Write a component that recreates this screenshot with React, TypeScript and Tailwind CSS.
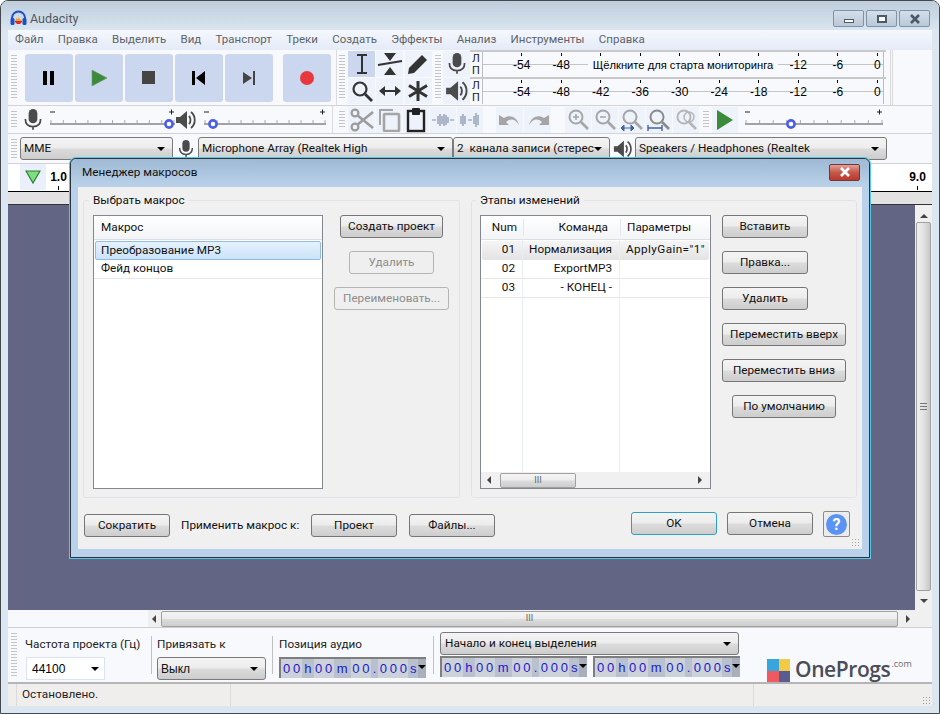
import type { ReactNode } from 'react'

const winBtnBg = 'bg-[linear-gradient(#f4f4f4_0%,#ececec_48%,#dcdcdc_52%,#cdcdcd_100%)]'

function Grip({ className = '' }: { className?: string }) {
  return (
    <div className={`w-[10px] shrink-0 flex flex-col justify-center items-center ${className}`}>
      <div className="w-[6px] h-full my-[5px] bg-[repeating-linear-gradient(#c4c4c4_0,#c4c4c4_1px,#f8f9fc_1px,#f8f9fc_3px)]" />
    </div>
  )
}

function TransportBtn({ children, className = '' }: { children: ReactNode; className?: string }) {
  return (
    <div className={`w-[48px] h-[48px] rounded-[3px] bg-[#cbd7ee] flex items-center justify-center ${className}`}>
      {children}
    </div>
  )
}

function Tool({ children, active, w = 'w-[27px]' }: { children: ReactNode; active?: boolean; w?: string }) {
  return (
    <div className={`${w} h-[26px] flex items-center justify-center ${active ? 'bg-[#cbd7ee]' : 'bg-[#eef2fb]'}`}>
      {children}
    </div>
  )
}

function Mic({ c = '#4b4b4b', size = 22 }: { c?: string; size?: number }) {
  return (
    <svg width={size} height={size} viewBox="0 0 22 22">
      <rect x="7" y="1" width="8" height="13" rx="4" fill={c} />
      <path d="M4 10c0 5 3 7 7 7s7-2 7-7M11 17v3" fill="none" stroke={c} strokeWidth="1.6" />
    </svg>
  )
}

function Speaker({ c = '#4b4b4b', size = 22 }: { c?: string; size?: number }) {
  return (
    <svg width={size} height={size} viewBox="0 0 22 22">
      <path d="M1 8h4l7-6v18l-7-6H1z" fill={c} />
      <path d="M14 7c2 2 2 6 0 8M16 3c5 4 5 12 0 16" fill="none" stroke={c} strokeWidth="1.8" />
    </svg>
  )
}

function Slider({ w, thumb }: { w: number; thumb: number }) {
  const ticks = Array.from({ length: 11 }, (_, i) => 1 + (i * (w - 2)) / 10)
  return (
    <svg width={w} height="24" viewBox={`0 0 ${w} 24`} className="shrink-0">
      <path d="M0 4h5" stroke="#222" />
      <path d={`M${w - 6} 4h5M${w - 3.5} 1.5v5`} stroke="#222" />
      {ticks.map((t) => (
        <path key={t} d={`M${t} 12v3`} stroke="#aaa" />
      ))}
      <path d={`M0 16h${w}`} stroke="#a2a2a2" strokeWidth="2" />
      <circle cx={thumb} cy="16" r="3.6" fill="#fff" stroke="#4a5ee8" strokeWidth="2.6" />
    </svg>
  )
}

function Magnifier({ c = '#a5a5a5', inner }: { c?: string; inner?: ReactNode }) {
  return (
    <svg width="24" height="24" viewBox="0 0 24 24">
      <circle cx="10" cy="9" r="6.5" fill="none" stroke={c} strokeWidth="2" />
      <path d="M15 14l7 7" stroke={c} strokeWidth="2.6" />
      {inner}
    </svg>
  )
}

function Combo({ w, text, textClass = '' }: { w: string; text: string; textClass?: string }) {
  return (
    <div className={`${w} h-[23px] shrink-0 rounded-[3px] border border-[#7a7a7a] ${winBtnBg} flex items-center pl-[3px] pr-[7px]`}>
      <span className={`flex-1 min-w-0 whitespace-pre text-[#111] ${textClass}`}>{text}</span>
      <span className="shrink-0 w-0 h-0 border-x-[4px] border-x-transparent border-t-[4px] border-t-black" />
    </div>
  )
}

function Btn({ children, w, disabled, focus }: { children: ReactNode; w: string; disabled?: boolean; focus?: boolean }) {
  const look = disabled
    ? 'border-[#b5b5b5] text-[#8d8d8d] bg-[#efefef]'
    : focus
      ? `border-[#2f9fc9] text-[#111] ${winBtnBg}`
      : `border-[#767676] text-[#111] ${winBtnBg}`
  return (
    <div className={`${w} h-[23px] shrink-0 rounded-[3px] border flex items-center justify-center ${look}`}>
      {children}
    </div>
  )
}

function Digits({ s, w }: { s: string; w: string }) {
  return (
    <span className={`${w} h-full bg-[#cdd1d8] flex items-center justify-center`}>
      {s.split('').map((d, i) => (
        <span key={i} className="w-[10px] text-center">{d}</span>
      ))}
    </span>
  )
}

function Unit({ s, w }: { s: string; w: string }) {
  return <span className={`${w} h-full flex items-center justify-center`}>{s}</span>
}

function TimeBox() {
  return (
    <div className="w-[147px] h-[21px] shrink-0 border-2 border-[#7e7e7e] border-r-0 border-b-0 bg-[#b9c0ce] flex items-center text-[#1a1ad0] text-[13px] font-['Liberation_Sans',sans-serif]">
      <Digits s="00" w="w-[22px]" />
      <Unit s="h" w="w-[12px]" />
      <Digits s="00" w="w-[20px]" />
      <Unit s="m" w="w-[18px]" />
      <Digits s="00" w="w-[20px]" />
      <Unit s="." w="w-[8px]" />
      <Digits s="000" w="w-[30px]" />
      <Unit s="s" w="w-[10px]" />
      <span className="flex-1 h-full bg-[#a9afbb] flex items-start justify-center pt-[6px]">
        <span className="w-0 h-0 border-x-[4px] border-x-transparent border-t-[4px] border-t-black" />
      </span>
    </div>
  )
}

function MeterRow({ hint }: { hint?: boolean }) {
  const labels = ['-54', '-48', '-42', '-36', '-30', '-24', '-18', '-12', '-6', '0']
  return (
    <div className="relative h-[27px] flex items-stretch border-t-2 border-[#c9c9c9]">
      <div className="w-[12px] flex flex-col items-center text-[11px] leading-[12px] text-[#222] pt-[1px]">
        <span>Л</span>
        <span>П</span>
      </div>
      <div className="relative w-[402px] border-x border-[#bdbdbd]">
        <div className="absolute left-0 right-0 top-[12px] h-px bg-[#c4c4c4]" />
        <div className="relative flex pl-[19px] text-[12px] text-black font-['Liberation_Sans',sans-serif]">
          {labels.map((l, i) => (
            <div key={l} className="w-[39.5px] shrink-0 flex flex-col items-center">
              <span className="w-px h-[3px] bg-black mt-[1px]" />
              {/* the hint covers the middle labels */}
              {!(hint && i >= 2 && i <= 6) && <span className="leading-[14px] mt-[2px]">{l}</span>}
            </div>
          ))}
        </div>
        {hint && (
          <div className="absolute left-[105px] top-[5px] w-[190px] h-[16px] bg-[#f8f9fc] text-[11.2px] leading-[16px] text-center text-black font-['Liberation_Sans',sans-serif] whitespace-nowrap">
            Щёлкните для старта мониторинга
          </div>
        )}
      </div>
    </div>
  )
}

function Hscroll() {
  return (
    <div className="h-[16px] flex items-center bg-[#f0f0f0]">
      <span className="ml-[6px] w-0 h-0 border-y-[4px] border-y-transparent border-r-[4px] border-r-[#444]" />
      <div className={`ml-[9px] w-[76px] h-[15px] rounded-[2px] border border-[#a0a0a0] ${winBtnBg} flex items-center justify-center text-[9px] leading-none text-[#666]`}>
        III
      </div>
      <span className="flex-1" />
      <span className="mr-[8px] w-0 h-0 border-y-[4px] border-y-transparent border-l-[4px] border-l-[#444]" />
    </div>
  )
}

export default function App() {
  const menu = ['Файл', 'Правка', 'Выделить', 'Вид', 'Транспорт', 'Треки', 'Создать', 'Эффекты', 'Анализ', 'Инструменты', 'Справка']
  const rows = [
    ['01', 'Нормализация', 'ApplyGain="1"'],
    ['02', 'ExportMP3', ''],
    ['03', '- КОНЕЦ -', ''],
  ]

  return (
    <div className="relative w-[940px] h-[714px] overflow-hidden rounded-t-[8px] border border-[#45494e] bg-[#dbe6f1] font-['Roboto','Open_Sans',sans-serif] text-[11.75px] flex flex-col">
      {/* title */}
      <div className="h-[29px] shrink-0 bg-[linear-gradient(#bfcddb,#d9e5f0)] flex items-center pl-[9px]">
        <svg width="17" height="17" viewBox="0 0 17 17" className="mt-[6px]">
          <path d="M2 10V8a6.5 6.5 0 0 1 13 0v2" fill="none" stroke="#1b4fc4" strokeWidth="2" />
          <rect x="0.5" y="8" width="4" height="7" rx="1.5" fill="#1b4fc4" />
          <rect x="12.5" y="8" width="4" height="7" rx="1.5" fill="#1b4fc4" />
          <path d="M5 11h7l-1-2-1 1-1-3-1 2-1-1-1 1z" fill="#f0a020" />
          <path d="M5 11h7v1l-2 2H7l-2-2z" fill="#e02828" />
        </svg>
        <span className="ml-[3px] mt-[7px] text-[12.5px] text-[#4f5963]">Audacity</span>
        <div className="ml-auto mr-[9px] self-start mt-[9px] flex gap-[2px]">
          {['min', 'max', 'close'].map((k) => (
            <div key={k} className="w-[31px] h-[17px] rounded-[2px] border border-[#8093a6] bg-[linear-gradient(#d4dfea,#b9c8d6)] flex items-center justify-center">
              {k === 'min' && <span className="w-[10px] h-[4px] mt-[4px] border border-[#4b5a68] bg-white" />}
              {k === 'max' && <span className="w-[10px] h-[8px] border-2 border-[#4b5a68] bg-white" />}
              {k === 'close' && (
                <svg width="12" height="10" viewBox="0 0 12 10">
                  <path d="M2 1l8 8M10 1l-8 8" stroke="#4b5a68" strokeWidth="2.6" />
                </svg>
              )}
            </div>
          ))}
        </div>
      </div>

      <div className="mx-[7px] flex-1 flex flex-col bg-[#f8f9fc] min-h-0">
        {/* menu */}
        <div className="h-[20px] shrink-0 bg-[linear-gradient(#f5f8fd,#e4ebf7)] flex items-center pl-[7px] gap-[14.3px] text-[11.5px] text-[#5f6368]">
          {menu.map((m) => (
            <span key={m}>{m}</span>
          ))}
        </div>

        {/* toolbar row 1 */}
        <div className="h-[56px] shrink-0 flex border-b border-[#d3d3d3]">
          <Grip className="ml-[1px]" />
          <div className="w-[318px] flex items-center pl-[6px] gap-[2px] border-r border-[#dcdcdc]">
            <TransportBtn>
              <svg width="14" height="14" viewBox="0 0 14 14"><path d="M1 0h4v14H1zM8 0h4v14H8z" fill="#000" /></svg>
            </TransportBtn>
            <TransportBtn>
              <svg width="16" height="16" viewBox="0 0 16 16"><path d="M1 0l15 8-15 8z" fill="#3c8a3c" stroke="#6a9a6a" strokeWidth=".6" /></svg>
            </TransportBtn>
            <TransportBtn>
              <svg width="14" height="14" viewBox="0 0 14 14"><rect width="13" height="13" fill="#454545" /></svg>
            </TransportBtn>
            <TransportBtn>
              <svg width="14" height="14" viewBox="0 0 14 14"><path d="M0 0h3v14H0zM13 0v14L4 7z" fill="#000" /></svg>
            </TransportBtn>
            <TransportBtn>
              <svg width="14" height="14" viewBox="0 0 14 14"><path d="M11 0h2v14h-2zM1 1v12l9-6z" fill="#454545" /></svg>
            </TransportBtn>
            <TransportBtn className="ml-[8px]">
              <svg width="14" height="14" viewBox="0 0 14 14"><circle cx="7" cy="7" r="7" fill="#e8383f" /></svg>
            </TransportBtn>
          </div>
          <Grip className="mr-[1px]" />
          <div className="w-[84px] grid grid-cols-3 gap-[1px] content-center">
            <Tool active>
              <svg width="18" height="22" viewBox="0 0 18 22"><path d="M4 2h10M4 20h10M9 2v18" stroke="#333" strokeWidth="2" /></svg>
            </Tool>
            <Tool>
              <svg width="26" height="24" viewBox="0 0 26 24"><path d="M7 1h12l-6 8zM7 23h12l-6-8z" fill="#333" /><path d="M1 13l24-4" stroke="#333" strokeWidth="2" /></svg>
            </Tool>
            <Tool>
              <svg width="22" height="22" viewBox="0 0 22 22"><path d="M1 21l1-6L15 2l5 5L7 20z" fill="#333" /></svg>
            </Tool>
            <Tool>
              <svg width="22" height="22" viewBox="0 0 22 22"><circle cx="9" cy="9" r="6.5" fill="none" stroke="#333" strokeWidth="2.2" /><path d="M14 14l7 7" stroke="#333" strokeWidth="2.8" /></svg>
            </Tool>
            <Tool>
              <svg width="22" height="14" viewBox="0 0 22 14"><path d="M4 7h14" stroke="#333" strokeWidth="2" /><path d="M0 7l6-5v10zM22 7l-6-5v10z" fill="#333" /></svg>
            </Tool>
            <Tool>
              <svg width="22" height="22" viewBox="0 0 22 22"><path d="M11 1v20M2 5.500l18 11M20 5.500L2 16.500" stroke="#333" strokeWidth="3" /></svg>
            </Tool>
          </div>
          <Grip className="ml-[1px]" />
          <div className="w-[27px] flex flex-col gap-[1px] justify-center">
            <Tool><Mic size={24} /></Tool>
            <Tool><Speaker size={24} /></Tool>
          </div>
          <div className="w-[416px] flex flex-col">
            <MeterRow hint />
            <MeterRow />
          </div>
          <div className="ml-[4px] w-[3px] border-x border-[#d9d9d9]" />
        </div>

        {/* toolbar row 2 */}
        <div className="h-[28px] shrink-0 flex items-center border-b border-[#d3d3d3]">
          <Grip className="ml-[1px] h-full" />
          <span className="w-[28px] flex justify-center"><Mic size={24} /></span>
          <span className="ml-[3px]"><Slider w={125} thumb={119} /></span>
          <span className="w-[22px] flex justify-center"><Speaker /></span>
          <span className="ml-[7px]"><Slider w={122} thumb={9} /></span>
          <span className="ml-[6px] w-px h-full bg-[#dcdcdc]" />
          <Grip className="ml-[4px] h-full" />
          <div className="ml-[1px] flex gap-[1px] items-center">
            <Tool>
              <svg width="24" height="24" viewBox="0 0 24 24"><circle cx="5" cy="5" r="3.4" fill="none" stroke="#9c9c9c" strokeWidth="2.2" /><circle cx="5" cy="19" r="3.4" fill="none" stroke="#9c9c9c" strokeWidth="2.2" /><path d="M7 7l16 13M7 17L23 4" stroke="#9c9c9c" strokeWidth="2.6" /></svg>
            </Tool>
            <Tool w="w-[26px]">
              <svg width="24" height="24" viewBox="0 0 24 24"><path d="M3 17V2h13" fill="none" stroke="#a5a5a5" strokeWidth="2" /><rect x="7" y="6" width="15" height="17" rx="1" fill="none" stroke="#a5a5a5" strokeWidth="2.6" /></svg>
            </Tool>
            <Tool w="w-[26px]">
              <svg width="20" height="26" viewBox="0 0 20 26"><rect x="2" y="4" width="16" height="20" fill="none" stroke="#222" strokeWidth="2.4" /><rect x="6" y="1" width="8" height="7" rx="1" fill="#222" /></svg>
            </Tool>
            <Tool w="w-[26px]">
              <svg width="22" height="14" viewBox="0 0 22 14"><path d="M0 7h4M18 7h4M6 3v8M8 1v12M10 3v8M12 1v12M14 2v10M16 4v6" stroke="#8090a8" strokeWidth="1.2" /></svg>
            </Tool>
            <Tool w="w-[26px]">
              <svg width="22" height="16" viewBox="0 0 22 16"><path d="M2 4v8M4 2v12M6 4v8M9 8h4M15 4v8M17 1v14M19 3v10" stroke="#8090a8" strokeWidth="1.2" /></svg>
            </Tool>
          </div>
          <div className="ml-[13px] flex gap-[1px] items-center">
            <Tool>
              <svg width="24" height="16" viewBox="0 0 24 16"><path d="M1 3v10h10l-3-3c5-4 9-3 13 3-2-8-9-11-15-7z" fill="#a5a5a5" /></svg>
            </Tool>
            <Tool>
              <svg width="24" height="16" viewBox="0 0 24 16"><path d="M23 3v10H13l3-3c-5-4-9-3-13 3 2-8 9-11 15-7z" fill="#a5a5a5" /></svg>
            </Tool>
          </div>
          <div className="ml-[14px] flex gap-[1px] items-center">
            <Tool w="w-[26px]">
              <Magnifier inner={<path d="M7 9h6M10 6v6" stroke="#a5a5a5" strokeWidth="1.5" />} />
            </Tool>
            <Tool w="w-[26px]">
              <Magnifier inner={<path d="M7 9h6" stroke="#a5a5a5" strokeWidth="1.5" />} />
            </Tool>
            <Tool w="w-[26px]">
              <Magnifier inner={<path d="M1 20h13M1 20l3-3v6zM14 20l-3-3v6z" fill="#3f62b5" stroke="#3f62b5" />} />
            </Tool>
            <Tool w="w-[26px]">
              <Magnifier c="#8a8a8a" inner={<path d="M1 17v6M15 17v6M1 20h14" stroke="#3f62b5" strokeWidth="1.4" />} />
            </Tool>
            <Tool w="w-[26px]">
              <Magnifier c="#b5b5b5" inner={<circle cx="15" cy="9" r="5" fill="none" stroke="#b5b5b5" strokeWidth="1.5" />} />
            </Tool>
          </div>
          <Grip className="ml-[2px] mr-[1px] h-full" />
          <Tool w="w-[26px]">
            <svg width="18" height="20" viewBox="0 0 18 20"><path d="M1 0l16 10-16 10z" fill="#3c8a3c" /></svg>
          </Tool>
          <span className="ml-[7px]"><Slider w={138} thumb={46} /></span>
        </div>

        {/* device row */}
        <div className="h-[29px] shrink-0 flex items-center relative z-0">
          <Grip className="ml-[1px] h-full" />
          <Combo w="w-[153px] ml-[1px]" text="MME" />
          <span className="w-[25px] flex justify-center"><Mic size={20} /></span>
          <Combo w="w-[255px]" text="Microphone Array (Realtek High" />
          <Combo w="w-[157px]" text="2  канала записи (стерес" />
          <span className="w-[25px] flex justify-center"><Speaker size={20} /></span>
          <Combo w="w-[252px]" text="Speakers / Headphones (Realtek" />
        </div>

        {/* ruler */}
        <div className="h-[42px] shrink-0 flex flex-col border-t border-[#d3d3d3] border-b border-b-[#333]">
          <div className="h-[28px] shrink-0 flex bg-white border-b border-black">
            <div className="ml-[12px] w-[26px] h-[26px] bg-[#eaf0fb] flex items-center justify-center">
              <svg width="16" height="14" viewBox="0 0 16 14"><path d="M1 1h14L8 13z" fill="#7be07b" stroke="#357a35" strokeWidth="1.2" /></svg>
            </div>
            <span className="ml-[4px] w-[17px] flex flex-col items-center font-bold font-['Liberation_Sans',sans-serif] leading-[14px] text-[12px]">
              <span className="mt-[6px]">1.0</span>
              <span className="mt-[2px] w-px h-[4px] bg-black" />
            </span>
            <span className="ml-auto mr-[6px] w-[17px] flex flex-col items-center font-bold font-['Liberation_Sans',sans-serif] leading-[14px] text-[12px]">
              <span className="mt-[6px]">9.0</span>
              <span className="mt-[2px] w-px h-[4px] bg-black" />
            </span>
          </div>
          <div className="flex-1 bg-[#e2e2e2]" />
        </div>

        {/* tracks */}
        <div className="flex-1 flex min-h-0 bg-[#626583]">
          <div className="flex-1" />
          <div className="w-[17px] bg-[#f0f0f0] flex flex-col items-center">
            <span className="mt-[9px] w-0 h-0 border-x-[4px] border-x-transparent border-b-[4px] border-b-[#444]" />
            <div className="mt-[4px] w-[15px] flex-1 border border-[#a0a0a0] rounded-[2px] bg-[linear-gradient(90deg,#f0f0f0,#e2e2e2_50%,#c8c8c8)] flex items-center justify-center">
              <span className="w-[7px] h-[7px] bg-[repeating-linear-gradient(#777_0,#777_1px,transparent_1px,transparent_3px)]" />
            </div>
            <span className="mt-[8px] mb-[7px] w-0 h-0 border-x-[4px] border-x-transparent border-t-[4px] border-t-[#444]" />
          </div>
        </div>

        {/* bottom scrollbar */}
        <div className="h-[17px] shrink-0 flex items-center bg-[#f0f0f0]">
          <div className="w-[140px] h-full bg-[#f8f9fc]" />
          <span className="ml-[4px] w-0 h-0 border-y-[4px] border-y-transparent border-r-[4px] border-r-[#444]" />
          <div className={`ml-[5px] flex-1 h-[16px] rounded-[2px] border border-[#a0a0a0] ${winBtnBg} flex items-center justify-center text-[9px] leading-none text-[#666]`}>
            III
          </div>
          <span className="mx-[8px] w-0 h-0 border-y-[4px] border-y-transparent border-l-[4px] border-l-[#444]" />
          <span className="w-[14px]" />
        </div>

        {/* selection toolbar */}
        <div className="h-[57px] shrink-0 flex border-t border-[#cfcfcf] border-b-2 border-b-[#b5b5b5] bg-[#f8f9fc]">
          <Grip className="ml-[1px]" />
          <div className="ml-[6px] w-[126px] flex flex-col">
            <span className="mt-[8px] h-[16px] text-[#222] whitespace-nowrap">Частота проекта (Гц)</span>
            <div className="mt-[5px] ml-[1px] w-[79px] h-[23px] border border-[#dde3ee] bg-white flex items-center pl-[5px] pr-[5px]">
              <span className="flex-1 text-[12px] font-['Liberation_Sans',sans-serif]">44100</span>
              <span className="w-0 h-0 border-x-[4px] border-x-transparent border-t-[4px] border-t-black" />
            </div>
          </div>
          <div className="w-px my-[8px] bg-[#c0c0c0]" />
          <div className="ml-[5px] w-[115px] flex flex-col">
            <span className="mt-[8px] h-[16px] text-[#222]">Привязать к</span>
            <div className="mt-[5px]">
              <Combo w="w-[109px]" text="Выкл" textClass="text-[12px] font-['Liberation_Sans',sans-serif]" />
            </div>
          </div>
          <div className="w-px my-[8px] bg-[#c0c0c0]" />
          <div className="ml-[6px] w-[154px] flex flex-col">
            <span className="mt-[8px] h-[16px] text-[#222]">Позиция аудио</span>
            <div className="mt-[5px]"><TimeBox /></div>
          </div>
          <div className="w-px my-[8px] bg-[#c0c0c0]" />
          <div className="ml-[6px] w-[300px] flex flex-col">
            <div className="mt-[4px]">
              <Combo w="w-[299px]" text="Начало и конец выделения" textClass="pl-[1px]" />
            </div>
            <div className="mt-[1px] flex gap-[6px]"><TimeBox /><TimeBox /></div>
          </div>
          <div className="ml-[27px] self-end flex items-end">
            <div className="grid grid-cols-2 w-[23px] h-[23px]">
              <span className="bg-[#38a6dc]" />
              <span className="bg-[#f2cb45]" />
              <span className="bg-[#ee5a5f]" />
              <span className="bg-[#585c90]" />
            </div>
            <span className="ml-[5px] mb-[-1px] text-[21px] leading-[27px] font-semibold text-[#4b4d58] tracking-[-0.4px] font-['Open_Sans',sans-serif]">OneProgs</span>
            <span className="mb-[13px] ml-[1px] text-[9px] leading-[10px] text-[#6a6c75] font-['Open_Sans',sans-serif]">.com</span>
          </div>
        </div>

        {/* status */}
        <div className="h-[22px] shrink-0 flex items-center bg-[#f0eded] text-[#222] relative">
          <div className="w-[9px] h-full border-r border-[#dcdad8]" />
          <span className="ml-[5px] w-[208px]">Остановлено.</span>
          <div className="w-px h-full bg-[#dcdad8]" />
          <div className="ml-[522px] w-px h-full bg-[#dcdad8]" />
          <span className="absolute right-[1px] bottom-[1px] w-[9px] h-[9px] bg-[radial-gradient(#9a9a9a_1px,transparent_1px)] bg-size-[3px_3px]" />
        </div>
      </div>
      <div className="h-[7px] shrink-0" />

      {/* dialog */}
      <div className="absolute left-[69px] top-[157px] w-[800px] h-[400px] rounded-t-[6px] border border-[#27343c] bg-[#b9d1ea] flex flex-col shadow-[0_0_0_1px_#58c7e8]">
        <div className="h-[28px] shrink-0 rounded-t-[6px] bg-[linear-gradient(#9fb9d4,#bad2e9)] flex items-center pl-[11px]">
          <span className="text-[#111]">Менеджер макросов</span>
          <div className="ml-auto mr-[9px] mt-[-2px] w-[31px] h-[17px] rounded-[2px] border border-[#6e3a33] bg-[linear-gradient(#e2a196,#c5584a_50%,#b9392d)] flex items-center justify-center">
            <svg width="12" height="10" viewBox="0 0 12 10"><path d="M2 1l8 8M10 1l-8 8" stroke="#fff" strokeWidth="2.6" /></svg>
          </div>
        </div>

        <div className="mx-[7px] mb-[8px] flex-1 bg-[#f0f0f0] relative pt-[13px] px-[5px]">
          <div className="flex gap-[11px]">
            {/* left group */}
            <div className="relative w-[377px] h-[298px] rounded-[3px] border border-[#dfe3e8] flex pl-[9px] pt-[14px]">
              <span className="absolute left-[5px] top-[-9px] px-[4px] bg-[#f0f0f0] leading-[16px] text-[#111]">Выбрать макрос</span>
              <div className="w-[230px] h-[274px] border border-[#828790] bg-white shrink-0">
                <div className="h-[24px] bg-[linear-gradient(#fff,#f2f4f6)] border-b border-[#dbdfe3] flex items-center pl-[7px] text-[#111]">Макрос</div>
                <div className="mt-px mx-[1px] h-[19px] rounded-[2px] border border-[#8fbde8] bg-[linear-gradient(#e6f2fd,#cbe3f9)] flex items-center pl-[5px] text-[#111]">Преобразование MP3</div>
                <div className="h-[19px] border-b border-[#e8e8e8] flex items-center pl-[7px] text-[#111]">Фейд концов</div>
              </div>
              <div className="w-[143px] flex flex-col items-center gap-[13px] pl-[1px]">
                <Btn w="w-[103px]">Создать проект</Btn>
                <Btn w="w-[85px]" disabled>Удалить</Btn>
                <Btn w="w-[115px]" disabled>Переименовать...</Btn>
              </div>
            </div>

            {/* right group */}
            <div className="relative w-[387px] h-[298px] rounded-[3px] border border-[#dfe3e8] flex pl-[8px] pt-[14px]">
              <span className="absolute left-[4px] top-[-9px] px-[4px] bg-[#f0f0f0] leading-[16px] text-[#111]">Этапы изменений</span>
              <div className="w-[231px] h-[274px] border border-[#828790] bg-white shrink-0 flex flex-col">
                <div className="h-[24px] shrink-0 bg-[linear-gradient(#fff,#f2f4f6)] border-b border-[#dbdfe3] flex items-center text-[#111]">
                  <span className="w-[42px] text-right pr-[6px]">Num</span>
                  <span className="w-[97px] text-right pr-[12px] border-l border-[#e4e8ee]">Команда</span>
                  <span className="flex-1 pl-[6px] border-l border-[#e4e8ee]">Параметры</span>
                </div>
                <div className="flex-1 relative min-h-0">
                  {rows.map((r, i) => (
                    <div key={r[0]} className={`h-[19px] flex items-center text-[#111] border-b ${i === 0 ? 'mx-[1px] mt-px rounded-[2px] border-[#e4e4e4] bg-[linear-gradient(#f5f5f5,#e4e4e4)]' : 'border-[#e8e8e8]'}`}>
                      <span className={`${i === 0 ? 'w-[41px]' : 'w-[42px]'} text-right pr-[8px]`}>{r[0]}</span>
                      <span className="w-[97px] text-right pr-[8px] whitespace-nowrap">{r[1]}</span>
                      <span className="flex-1 pl-[6px] whitespace-nowrap overflow-hidden tracking-[0.4px]">{r[2]}</span>
                    </div>
                  ))}
                  <div className="absolute top-0 bottom-0 left-[41px] w-px bg-[#e6eef8]" />
                  <div className="absolute top-0 bottom-0 left-[138px] w-px bg-[#e6eef8]" />
                </div>
                <Hscroll />
              </div>
              <div className="ml-[11px] w-[124px] flex flex-col gap-[13px]">
                <Btn w="w-[86px]">Вставить</Btn>
                <Btn w="w-[86px]">Правка...</Btn>
                <Btn w="w-[86px]">Удалить</Btn>
                <Btn w="w-[124px]">Переместить вверх</Btn>
                <Btn w="w-[124px]">Переместить вниз</Btn>
                <div className="pl-[10px]"><Btn w="w-[104px]">По умолчанию</Btn></div>
              </div>
            </div>
          </div>

          {/* footer */}
          <div className="mt-[14px] flex items-start">
            <div className="pl-[1px] pt-[2px] flex items-center">
              <Btn w="w-[86px]">Сократить</Btn>
              <span className="ml-[11px] w-[130px] text-[#111]">Применить макрос к:</span>
              <Btn w="w-[86px]">Проект</Btn>
              <span className="w-[12px]" />
              <Btn w="w-[86px]">Файлы...</Btn>
            </div>
            <div className="ml-[136px]"><Btn w="w-[86px]" focus>OK</Btn></div>
            <div className="ml-[10px]"><Btn w="w-[86px]">Отмена</Btn></div>
            <div className="ml-[10px] mt-[-1px] w-[27px] h-[26px] rounded-[2px] border border-[#8a8a8a] bg-[#ececec] flex items-center justify-center">
              <span className="w-[21px] h-[21px] rounded-full bg-[#5a93f5] text-white text-[16px] font-bold leading-[21px] text-center">?</span>
            </div>
          </div>
          <span className="absolute right-[2px] bottom-[2px] w-[9px] h-[9px] bg-[radial-gradient(#a8a8a8_1px,transparent_1px)] bg-size-[3px_3px]" />
        </div>
      </div>
    </div>
  )
}
